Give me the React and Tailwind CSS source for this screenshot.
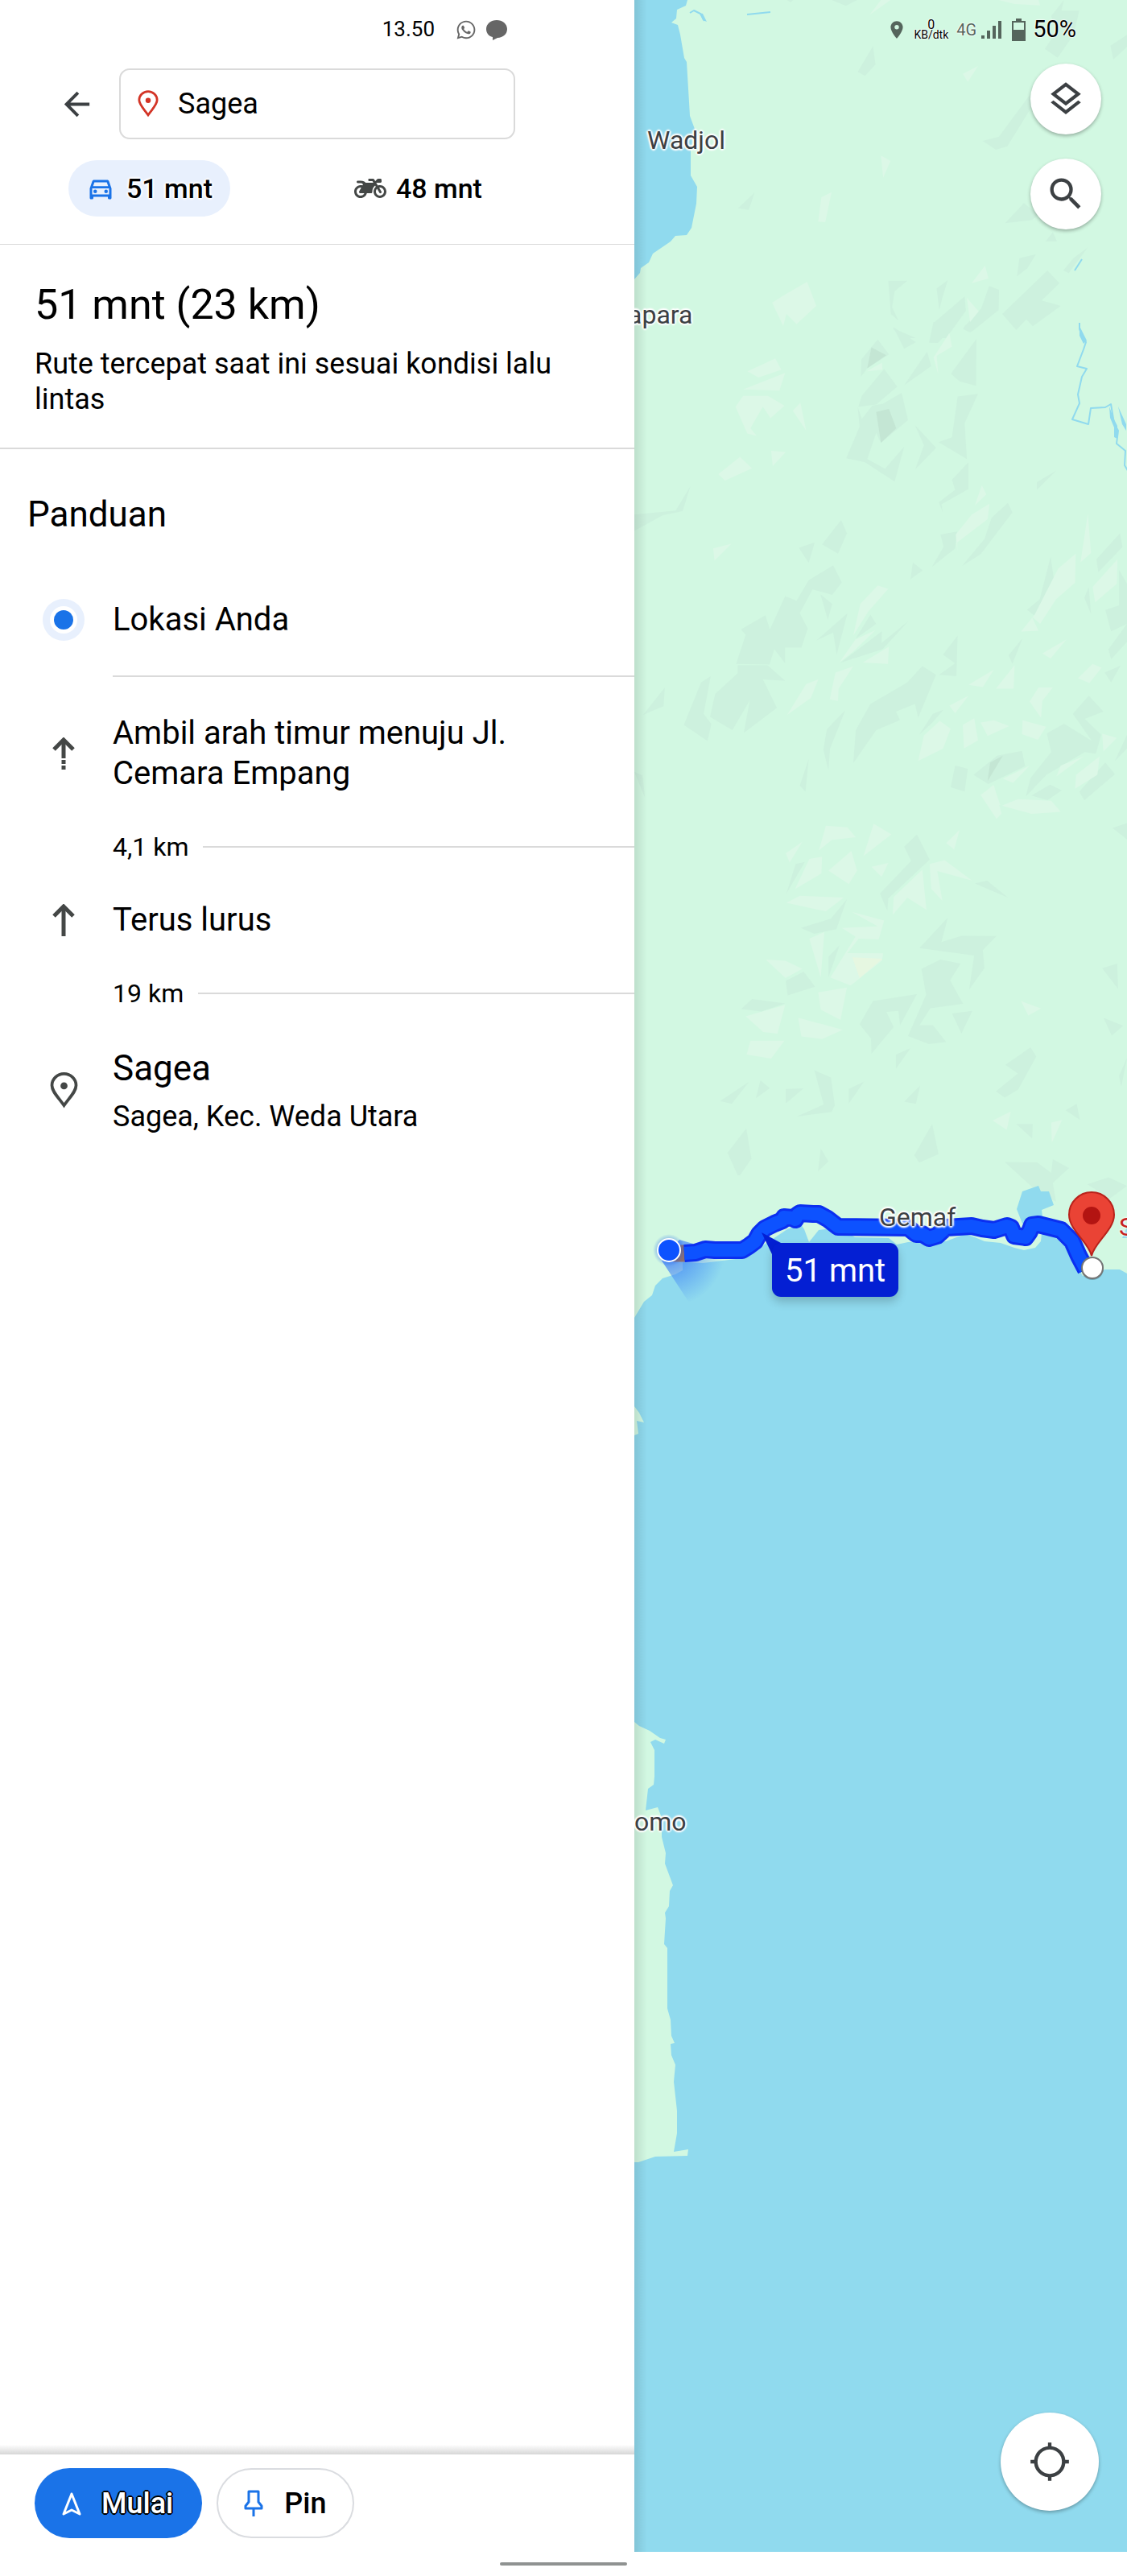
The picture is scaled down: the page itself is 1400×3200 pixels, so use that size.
import React from 'react';
import { MdArrowBack, MdLocationOn, MdLocationSearching, MdOutlineDirectionsCar, MdOutlineLayers, MdSearch } from 'react-icons/md';
import { FaMotorcycle, FaWhatsapp } from 'react-icons/fa';

// Terrain relief, grouped per map tile. Each tile keeps its own local grid.
const tiles = [
  {
    transform: 'translate(-8 0) scale(0.3954 0.3333)',
    dark: [
      '770,172 778,240 745,283 722,268', '1262,355 1268,400 1192,545 1156,558 1114,525 1165,510', '398,718 380,782 346,776',
      '1244,757 1290,800 1270,820 1185,832', '1335,865 1348,900 1312,900', '1282,948 1255,1000 1222,1030 1230,962',
      '1445,922 1385,1018 1368,1008 1400,962', '818,1046 878,1046 838,1085 830,1145 850,1195 826,1170', '1005,1044 988,1110 978,1155 970,1075',
      '1058,1105 1062,1158 1000,1260 955,1260 962,1202', '1135,1066 1166,1080 1165,1155 1080,1236 1055,1220 1110,1150',
      '1318,1008 1356,1055 1300,1120 1360,1140 1272,1216 1252,1190 1220,1230 1176,1170', '1568,130 1568,175 1525,222 1516,170',
      '1370,0 1362,40 1418,40 1400,130 1350,215 1310,182 1345,120 1330,60', '640,0 720,0 685,22', '830,1222 905,1260 865,1260', '500,0 520,0 510,8',
    ],
    light: [
      '1100,246 1068,305 1052,275', '795,580 825,600 802,662', '640,716 620,828 598,826 608,735', '563,1050 592,1140 530,1208 498,1170 488,1215 453,1128 490,1100',
      '1122,990 1133,1038 1080,1055', '1065,1110 1102,1160 1075,1200', '795,0 825,0 760,55', '1165,0 1290,0 1295,20 1215,15',
    ],
  },
  {
    transform: 'translate(-8 400) scale(0.3954 0.3827)',
    dark: [
      '785,57 820,105 752,150 732,178 733,122', '833,16 905,65 868,87', '960,0 1034,0 974,68 946,67', '1080,0 1118,0 1075,34 1052,22',
      '940,97 953,143 868,205', '1095,55 1094,207 1042,193 1015,168', '805,153 846,210 780,268 724,275 735,240',
      '860,230 880,318 795,392 780,360 752,445 808,476 868,405 838,518 745,455 686,442 728,340 722,276 735,315 768,271 800,266',
      '902,335 968,408 903,478 930,400', '1036,242 1100,233 1058,328 1065,445 976,390 1018,374', '1070,455 1070,542 985,592 990,620 977,585 1028,545 1018,512',
      '1346,482 1285,545 1285,520', '196,534 172,614 110,627 20,678 20,625 150,612', '670,643 688,686 660,752 610,722', '587,715 568,782 537,733',
      '982,690 1034,680 1028,735 955,795 992,730', '1194,587 1208,618 1108,754 1050,792 1120,705 1143,635', '895,780 926,806 888,835',
      '645,790 672,845 642,886 580,868 540,945 565,995 545,1057 494,1057 494,1108 460,1062 445,1112 340,1110 370,1015 355,998 432,952 446,998 494,890 530,905 568,838',
      '605,884 642,915 628,967', '690,945 656,1080 645,1008 592,1034', '762,950 780,980 715,1028', '882,970 800,1062 668,1106 798,1004 797,1042',
      '1036,1018 1032,1150 978,1145 1028,1108 990,1080', '345,1114 438,1114 494,1165 424,1160 468,1252 364,1334 383,1228 328,1325 258,1282 274,1208 345,1140',
      '260,1150 238,1272 262,1305 250,1360 176,1308 230,1170', '116,1186 112,1247 48,1275', '925,1117 968,1145 912,1284 902,1240 842,1265 855,1292 780,1325 708,1432 716,1325 762,1240 878,1170',
      '683,1260 635,1385 630,1455 614,1388 625,1322', '992,1258 955,1302 915,1340 958,1272', '568,1418 558,1524 540,1505', '1028,1440 1068,1450 1058,1524 1014,1510',
      '1160,1408 1238,1392 1248,1442 1132,1500 1086,1470', '1448,1213 1494,1265 1435,1288 1487,1340 1470,1402 1435,1396 1315,1470 1250,1540 1265,1480 1330,1396 1316,1335 1370,1304 1458,1360 1398,1272',
      '1328,762 1338,832 1300,925 1280,955 1254,934 1294,900', '1546,686 1554,730 1478,812 1472,770', '1543,805 1568,850 1568,980 1518,1004 1500,935 1543,920',
      '1448,860 1455,948 1434,895', '1568,980 1568,1038 1518,1095 1510,1062', '1240,1026 1208,1110 1196,1082', '1548,1115 1518,1170 1498,1138',
      '1500,1430 1530,1468 1434,1552 1418,1525', '1326,1502 1363,1520 1318,1552 1268,1537', '20,1460 46,1472 54,1545', '1568,1340 1568,1385 1530,1425',
    ],
    light: [
      '463,118 482,155 410,180 376,160', '494,165 476,223 362,219', '362,240 440,240 492,272 448,312 424,275 385,345 405,370 375,362 338,275', '542,262 560,352 518,288',
      '352,438 390,475 305,515 284,494', '450,418 496,422 455,468', '325,720 272,775 268,735', '1010,36 1018,80 970,110 975,170 960,115', '798,132 800,155 750,160',
      '1112,530 1126,560 1090,595', '1136,590 1130,640 1035,715 1035,745 1030,690 1080,625', '785,855 818,866 755,940 708,1018 730,915', '778,1000 710,1068 664,1106 715,1030',
      '820,1054 817,1110 738,1105', '708,1118 662,1190 660,1230 634,1225 652,1138', '598,1160 575,1220 500,1276 560,1175', '1407,752 1405,846 1345,900 1295,980 1268,955 1290,1002 1235,1005 1278,950 1352,800',
      '1445,622 1455,750 1422,780', '1538,770 1536,850 1468,910 1460,860', '1378,1030 1328,1092 1302,1076', '1150,1128 1115,1185 1070,1178', '1215,1114 1212,1190 1156,1190',
      '1460,1110 1488,1122 1450,1172 1414,1156', '1290,1186 1335,1186 1302,1230 1298,1285 1262,1232', '1070,1213 1028,1270 1010,1245', '980,1295 1014,1320 990,1385 912,1425 930,1342',
      '1088,1286 1100,1358 1056,1384 1052,1308', '1108,1300 1150,1293 1198,1312 1130,1344', '1240,1293 1314,1314 1288,1356 1238,1338', '1490,1336 1536,1350 1494,1394',
      '1482,1410 1475,1470 1405,1515 1408,1470', '1262,1440 1210,1496 1178,1482', '1432,1410 1346,1475 1360,1440', '1148,1503 1170,1568 1135,1568 1110,1535',
    ],
    deep: ['765,82 812,108 752,150', '780,292 820,282 843,345 795,392', '1178,1408 1130,1490 1138,1430'],
  },
  {
    transform: 'translate(-8 900) scale(0.3954 0.3571)',
    dark: [
      '908,383 948,470 818,605 815,648 792,588 890,475 868,425', '527,485 556,478 498,588', '688,608 655,712 586,728 543,708 638,675', '1128,543 1195,603 1090,553',
      '665,768 630,880 630,808', '1005,672 985,757 1048,735 1158,736 1115,785 1120,848 1072,922 1088,804 916,778', '552,860 588,912 502,942 496,892',
      '982,818 1045,832 1012,890 1053,972 950,987 916,1046 958,1046 1000,1105 945,1112 880,1084 937,940 922,850', '390,955 494,970 420,998 356,990',
      '908,938 855,1046 850,996 812,1000 835,1052 765,1145 764,1092 728,1043 770,962', '1082,996 1048,1075 1018,1005', '888,1126 842,1198 842,1148',
      '1265,1123 1283,1155 1226,1270 1184,1298 1156,1276 1225,1214 1186,1184', '1537,832 1540,920 1490,848', '1494,1020 1556,1048 1520,1082',
      '380,1243 326,1320 290,1310', '416,1238 446,1265 402,1300', '496,1268 552,1266 496,1318', '586,1203 638,1228 650,1325 640,1348 530,1364 615,1322',
      '742,1242 694,1318 694,1268', '918,1256 905,1320 868,1312', '372,1405 388,1510 352,1568 345,1568 313,1490', '606,1475 630,1520 597,1555',
      '956,1390 976,1495 915,1524 900,1498', '1410,1320 1420,1375 1375,1342', '1220,1390 1272,1390 1270,1440', '1184,1522 1285,1523 1330,1560 1335,1512 1386,1543 1335,1595 1345,1660 1290,1630',
      '1568,343 1568,400 1522,360', '1568,1160 1550,1260 1543,1222', '1510,1575 1568,1605 1515,1648 1443,1600',
    ],
    light: [
      '622,352 690,358 716,392 640,402 600,438', '772,345 828,382 740,458', '548,408 508,480 496,448', '610,460 608,518 525,573 570,468', '702,440 720,508 694,555 630,508',
      '818,482 797,530 765,495', '1042,367 1025,435 1000,412', '1150,212 1174,310 1158,328 1108,245', '1225,260 1330,265 1360,304 1268,311 1175,282',
      '925,505 938,645 878,603 832,662 835,600', '948,485 995,472 1082,543 972,510 988,613 953,572', '540,596 678,602 622,650 498,620',
      '703,652 805,682 788,748 725,745 690,795 802,796 798,822 700,908 636,880 715,738 672,708 785,702', '617,722 606,880 570,745', '433,818 495,822 548,850 495,882',
      '688,915 668,1028 606,992 598,932', '494,975 470,1075 425,1070 370,1015', '535,1020 675,1062 610,1094 545,1085', '385,1100 492,1100 450,1162 373,1148',
      '1235,962 1298,988 1258,1012', '1203,1346 1190,1410 1146,1378', '1364,1376 1332,1455 1330,1385',
    ],
    sand: ['705,810 800,815 728,882'],
  },
];

const coast =
  '66,0 64,7 53,12 52,23 46,28 54,31 57,43 62,72 65,77 68,127 69,144 76,163 70,187 70,218 78,232 77,253 71,283 65,292 51,293 45,300 23,315 18,326 8,333 7,339 0,347 ' +
  '0,1637 12,1617 22,1609 26,1597 35,1588 51,1583 60,1578 60,1568 85,1569 134,1563 166,1543 190,1527 207,1521 211,1527 217,1543 229,1528 245,1526 269,1534 274,1537 316,1538 326,1546 340,1543 387,1542 411,1533 423,1537 435,1542 455,1544 472,1550 484,1553 498,1550 505,1542 506,1532 526,1533 538,1550 550,1573 557,1585 585,1577 603,1577 612,1582 612,0';

const island =
  '0,2139 6,2144 19,2150 32,2159 39,2161 37,2166 26,2161 20,2164 25,2174 25,2207 24,2217 17,2222 14,2249 29,2245 34,2258 34,2282 39,2302 38,2315 48,2342 44,2349 43,2368 38,2376 39,2383 37,2415 41,2420 41,2495 45,2509 46,2529 50,2538 45,2539 46,2553 51,2565 49,2586 53,2622 53,2650 49,2673 67,2670 66,2678 26,2679 5,2686 0,2686';

const route =
  '62,1557 76,1556 88,1552 100,1553 134,1553 142,1548 150,1542 155,1533 162,1526 174,1520 184,1516 186,1512 196,1513 200,1515 203,1509 206,1507 222,1508 229,1508 240,1514 253,1524 340,1525 350,1533 358,1533 366,1538 376,1535 387,1525 419,1523 432,1526 447,1528 463,1523 468,1525 472,1535 486,1537 491,1530 494,1522 502,1521 530,1528 544,1542 552,1560 561,1577';

function Polygons({ points = [], className }) {
  return points.map((p) => <polygon key={p} points={p} className={className} />);
}

function MapCanvas() {
  return (
    <svg viewBox="0 0 612 3170" preserveAspectRatio="xMinYMin slice" className="absolute inset-0 w-full h-full" aria-hidden="true">
      <defs>
        <radialGradient id="beam" gradientUnits="userSpaceOnUse" cx="43" cy="1553" r="70">
          <stop offset="0.2" stopColor="#3b7df6" stopOpacity="0.75" />
          <stop offset="1" stopColor="#3b82f6" stopOpacity="0" />
        </radialGradient>
        <radialGradient id="halo">
          <stop offset="0.6" stopColor="#1a5cf0" stopOpacity="0.45" />
          <stop offset="1" stopColor="#1a5cf0" stopOpacity="0" />
        </radialGradient>
      </defs>
      <polygon points={coast} fill="#d2f8e2" />
      <polygon points={island} fill="#d2f8e2" />
      <polygon points="0,1747 6,1755 12,1767 3,1765 5,1781 0,1783" fill="#d2f8e2" />

      {tiles.map((tile) => (
        <g key={tile.transform} transform={tile.transform}>
          <Polygons points={tile.dark} className="fill-[#cdf1de]" />
          <Polygons points={tile.light} className="fill-[#dcf8e7]" />
          <Polygons points={tile.deep} className="fill-[#c4e6d4]" />
          <Polygons points={tile.sand} className="fill-[#e6f7e1]" />
        </g>
      ))}

      {/* Rivers and lake */}
      <g fill="none" stroke="#90daee" strokeWidth="2" strokeLinejoin="round">
        <path d="M553 401l0 8 4 10 4 6-3 9-8 21 12 3-6 10-5 22 2 11-9 20 20 6 3-20 18-1 7-4 4 24 5 9-2 16 11 9-1 18 6 10" />
        <path d="M69 16l5-3 8 4 5 9M140 18l29-3M547 336l9-14" />
      </g>
      <path d="M553 405l5 10 4 8-4 4-5-10zM590 505l6 16 4 8v16l-4-2v-12l-5-12zM81 16l4 1 5 10-5-2zM606 1538l6-14v14zM601 505l10 22v8l-5-8z" fill="#90daee" />
      <polygon points="475,1502 482,1480 502,1473 505,1480 515,1480 521,1497 506,1503 508,1520 482,1520" fill="#90daee" />

      {/* Current position beam */}
      <polygon points="34,1566 68,1618 120,1600 124,1560 56,1540" fill="url(#beam)" />

      {/* Route */}
      <path d="M48 1557h15" stroke="#8b6f72" strokeWidth="21" />
      <polyline points={route} fill="none" stroke="#0b2ff0" strokeWidth="22" strokeLinejoin="round" />
      <polyline points={route} fill="none" stroke="#0d52ff" strokeWidth="16" strokeLinejoin="round" />

      <circle cx="43" cy="1553" r="20" fill="url(#halo)" />
      <circle cx="43" cy="1553" r="14" fill="#0d52ff" stroke="#fff" strokeWidth="2" />

      {/* Destination */}
      <path d="M568 1560c-3-16-28-32-28-51a28 28 0 0 1 56 0c0 19-25 35-28 51z" fill="#ea4335" stroke="#b9221b" strokeWidth="2" />
      <circle cx="568" cy="1510" r="11" fill="#b31412" />
      <circle cx="569" cy="1576" r="14" fill="#000" opacity="0.25" />
      <circle cx="569" cy="1575" r="13" fill="#fff" stroke="#757575" strokeWidth="2" />

      {/* Callout tail */}
      <polygon points="158,1531 182,1544 184,1562 171,1558" fill="#041fd3" />
    </svg>
  );
}

function PinIcon({ className }) {
  return (
    <svg viewBox="0 0 28 36" className={className} fill="none" aria-hidden="true">
      <path d="M14 33C8 24.500 2 19 2 13a12 11.500 0 0 1 24 0c0 6-6 11.500-12 20z" stroke="currentColor" strokeWidth="3" />
      <circle cx="14" cy="13.500" r="3.500" fill="currentColor" />
    </svg>
  );
}

function StraightIcon({ dotted }) {
  return (
    <svg viewBox="0 0 28 40" className="w-7 h-10" fill="none" stroke="#444746" strokeWidth="5" aria-hidden="true">
      <path d="M2 15L14 3l12 12" />
      {dotted ? <path d="M14 4v22M14 28v5M14 35v5" /> : <path d="M14 4v36" />}
    </svg>
  );
}

function Step({ icon, children }) {
  return (
    <div className="flex items-center gap-[34px] pl-[52px] pr-[43px]">
      <div className="flex w-[54px] shrink-0 justify-center">{icon}</div>
      <div className="text-[40px] leading-[50px]">{children}</div>
    </div>
  );
}

function Distance({ children }) {
  return (
    <div className="flex items-center gap-[18px] pl-[140px] text-[32px] leading-10">
      {children}
      <div className="h-[2px] flex-1 bg-[#dadada]" />
    </div>
  );
}

const mapLabel =
  'absolute text-[32px] leading-10 text-[#3c4043] [text-shadow:0_0_3px_#fff,0_0_3px_#fff,2px_0_2px_#fff,-2px_0_2px_#fff,0_2px_2px_#fff,0_-2px_2px_#fff]';
const mapButton = 'flex items-center justify-center rounded-full bg-white text-[#3c4043] shadow-[0_2px_4px_rgba(0,0,0,0.3)]';

function Panel() {
  return (
    <section className="flex flex-col bg-white">
      <header className="border-b border-[#dadada] pb-[34px]">
        <div className="flex h-[73px] items-center justify-end pr-[158px] text-[26px]">
          <span>13.50</span>
          <FaWhatsapp className="ml-[26px] size-[26px] text-[#666]" />
          <svg viewBox="0 0 26 26" className="ml-3 size-[26px]" fill="#666" aria-hidden="true">
            <path d="M13 1c7 0 13 4.500 13 11s-5 10.500-12 11l-6 3v-4C3 21 0 17 0 12 0 5.500 6 1 13 1z" />
          </svg>
        </div>
        <div className="flex items-center gap-[29px] pl-[72px] pr-[148px] pt-3">
          <button type="button" aria-label="Kembali" className="text-[#3c4043]">
            <MdArrowBack className="size-[47px]" />
          </button>
          <label className="flex h-[88px] flex-1 items-center gap-6 rounded-[13px] border-2 border-[#dadada] pl-[21px]">
            <PinIcon className="h-[34px] w-[26px] text-[#d33426]" />
            <input type="text" aria-label="Tujuan" defaultValue="Sagea" className="w-full min-w-0 flex-1 bg-transparent text-[36px] outline-none" />
          </label>
        </div>
        <div className="mt-[26px] flex gap-[130px] pl-[85px] text-[34px] font-medium">
          <button type="button" className="flex h-[70px] items-center gap-[14px] rounded-full bg-[#e8f0fd] pl-[22px] pr-[22px] [text-shadow:0_0_2px_#fff,2px_0_2px_#fff,-2px_0_2px_#fff,0_2px_2px_#fff,0_-2px_2px_#fff]">
            <MdOutlineDirectionsCar className="size-9 text-[#1a73e8]" />
            51 mnt
          </button>
          <button type="button" className="flex h-[70px] items-center gap-3 rounded-full px-6">
            <FaMotorcycle className="size-10 text-[#444746]" />
            48 mnt
          </button>
        </div>
      </header>

      <div className="border-b-2 border-[#dadada] px-[43px] pb-[38px] pt-[45px]">
        <h1 className="text-[52px] leading-[60px]">51 mnt (23 km)</h1>
        <p className="mt-[21px] text-[36px] leading-[44px]">Rute tercepat saat ini sesuai kondisi lalu lintas</p>
      </div>

      <h2 className="px-[34px] pt-14 text-[44px] leading-[50px]">Panduan</h2>

      <div className="pt-20">
        <Step
          icon={
            <span className="flex size-[52px] items-center justify-center rounded-full bg-[#e8f0fd]">
              <span className="size-[34px] rounded-full border-[5px] border-white bg-[#1a73e8]" />
            </span>
          }
        >
          Lokasi Anda
        </Step>
        <div className="ml-[140px] mt-[43px] h-[2px] bg-[#dadada]" />
      </div>

      <div className="flex flex-1 flex-col gap-[46px] pt-[45px]">
        <Step icon={<StraightIcon dotted />}>Ambil arah timur menuju Jl. Cemara Empang</Step>
        <Distance>4,1 km</Distance>
        <Step icon={<StraightIcon />}>Terus lurus</Step>
        <Distance>19 km</Distance>
        <Step icon={<PinIcon className="h-[45px] w-[35px] text-[#444746]" />}>
          <div className="text-[44px] leading-[54px]">Sagea</div>
          <div className="mt-[11px] text-[36px] leading-[44px]">Sagea, Kec. Weda Utara</div>
        </Step>
      </div>

      <div className="h-3 bg-linear-to-b from-white to-[#d6d6d6]" />
      <div className="flex gap-[18px] px-[43px] py-[17px] text-[36px] font-medium">
        <button
          type="button"
          className="flex h-[87px] items-center gap-6 rounded-full bg-[#1a73e8] pl-[33px] pr-9 text-white [text-shadow:2px_0_#000,-2px_0_#000,0_2px_#000,0_-2px_#000,1px_1px_#000,-1px_-1px_#000,1px_-1px_#000,-1px_1px_#000]"
        >
          <svg viewBox="0 0 26 32" className="h-8 w-[26px]" fill="none" stroke="#fff" strokeWidth="3" strokeLinejoin="round" aria-hidden="true">
            <path d="M13 4L3 29l10-5 10 5z" />
          </svg>
          Mulai
        </button>
        <button type="button" className="flex h-[87px] items-center gap-[26px] rounded-full border-2 border-[#dadce0] pl-8 pr-[33px]">
          <svg viewBox="0 0 24 34" className="h-[34px] w-6" fill="none" stroke="#1a73e8" strokeWidth="3" strokeLinejoin="round" aria-hidden="true">
            <path d="M6 2h12v13l4 5v3H2v-3l4-5zM12 23v10" />
          </svg>
          Pin
        </button>
      </div>
    </section>
  );
}

function MapView() {
  return (
    <section className="relative flex flex-col items-end overflow-hidden bg-[#90daee]">
      <MapCanvas />
      <div className="absolute inset-y-0 left-0 w-4 bg-linear-to-r from-black/10 to-transparent" />

      <span className={`${mapLabel} left-4 top-[154px]`}>Wadjol</span>
      <span className={`${mapLabel} left-[-8px] top-[371px]`}>apara</span>
      <span className={`${mapLabel} left-[304px] top-[1492px]`}>Gemaf</span>
      <span className={`${mapLabel} left-0 top-[2243px]`}>omo</span>
      <span className="absolute left-[602px] top-[1504px] text-[32px] leading-10 text-[#c5221f] [text-shadow:0_0_3px_#fff,0_0_3px_#fff]">S</span>
      <span className="absolute left-[171px] top-[1544px] rounded-[11px] bg-[#041fd3] px-4 pb-2 pt-[10px] text-[40px] leading-[49px] text-white shadow-[0_6px_12px_rgba(0,0,0,0.2)]">
        51 mnt
      </span>

      <div className="relative flex h-[73px] items-center pr-[63px] [text-shadow:0_0_2px_#fff,0_0_2px_#fff,0_0_2px_#fff]">
        <MdLocationOn className="size-[26px] text-[#55655c]" />
        <div className="ml-2 text-center text-[14px] leading-[13px]">
          <div className="text-[16px]">0</div>
          KB/dtk
        </div>
        <span className="ml-[10px] text-[20px] text-[#55655c]">4G</span>
        <svg viewBox="0 0 25 22" className="ml-[6px] h-[22px] w-[25px]" fill="#55655c" aria-hidden="true">
          <path d="M0 18h4v4H0zM7 12h4v10H7zM14 6h4v16h-4zM21 0h4v22h-4z" />
        </svg>
        <svg viewBox="0 0 17 28" className="ml-[13px] h-7 w-[17px]" aria-hidden="true">
          <path d="M5 0h7v3h5v25H0V3h5z" fill="#55655c" />
          <path d="M2 5h13v9H2z" fill="#d2f8e2" />
        </svg>
        <span className="ml-[9px] text-[29px]">50%</span>
      </div>
      <div className="relative flex flex-1 flex-col gap-[30px] pr-8 pt-[6px]">
        <button type="button" aria-label="Lapisan" className={`${mapButton} size-[88px]`}>
          <MdOutlineLayers className="size-[50px]" />
        </button>
        <button type="button" aria-label="Telusuri" className={`${mapButton} size-[88px]`}>
          <MdSearch className="size-[52px]" />
        </button>
      </div>
      <div className="relative pb-[51px] pr-[35px]">
        <button type="button" aria-label="Lokasi saya" className={`${mapButton} size-[122px]`}>
          <MdLocationSearching className="size-[52px]" />
        </button>
      </div>
    </section>
  );
}

export default function App() {
  return (
    <div className="flex min-h-screen flex-col bg-white font-['Roboto',sans-serif] text-black">
      <main className="grid flex-1 grid-cols-[197fr_153fr]">
        <Panel />
        <MapView />
      </main>
      <footer className="flex h-[30px] items-center justify-center">
        <div className="h-1 w-[158px] rounded-full bg-[#8f9291]" />
      </footer>
    </div>
  );
}
